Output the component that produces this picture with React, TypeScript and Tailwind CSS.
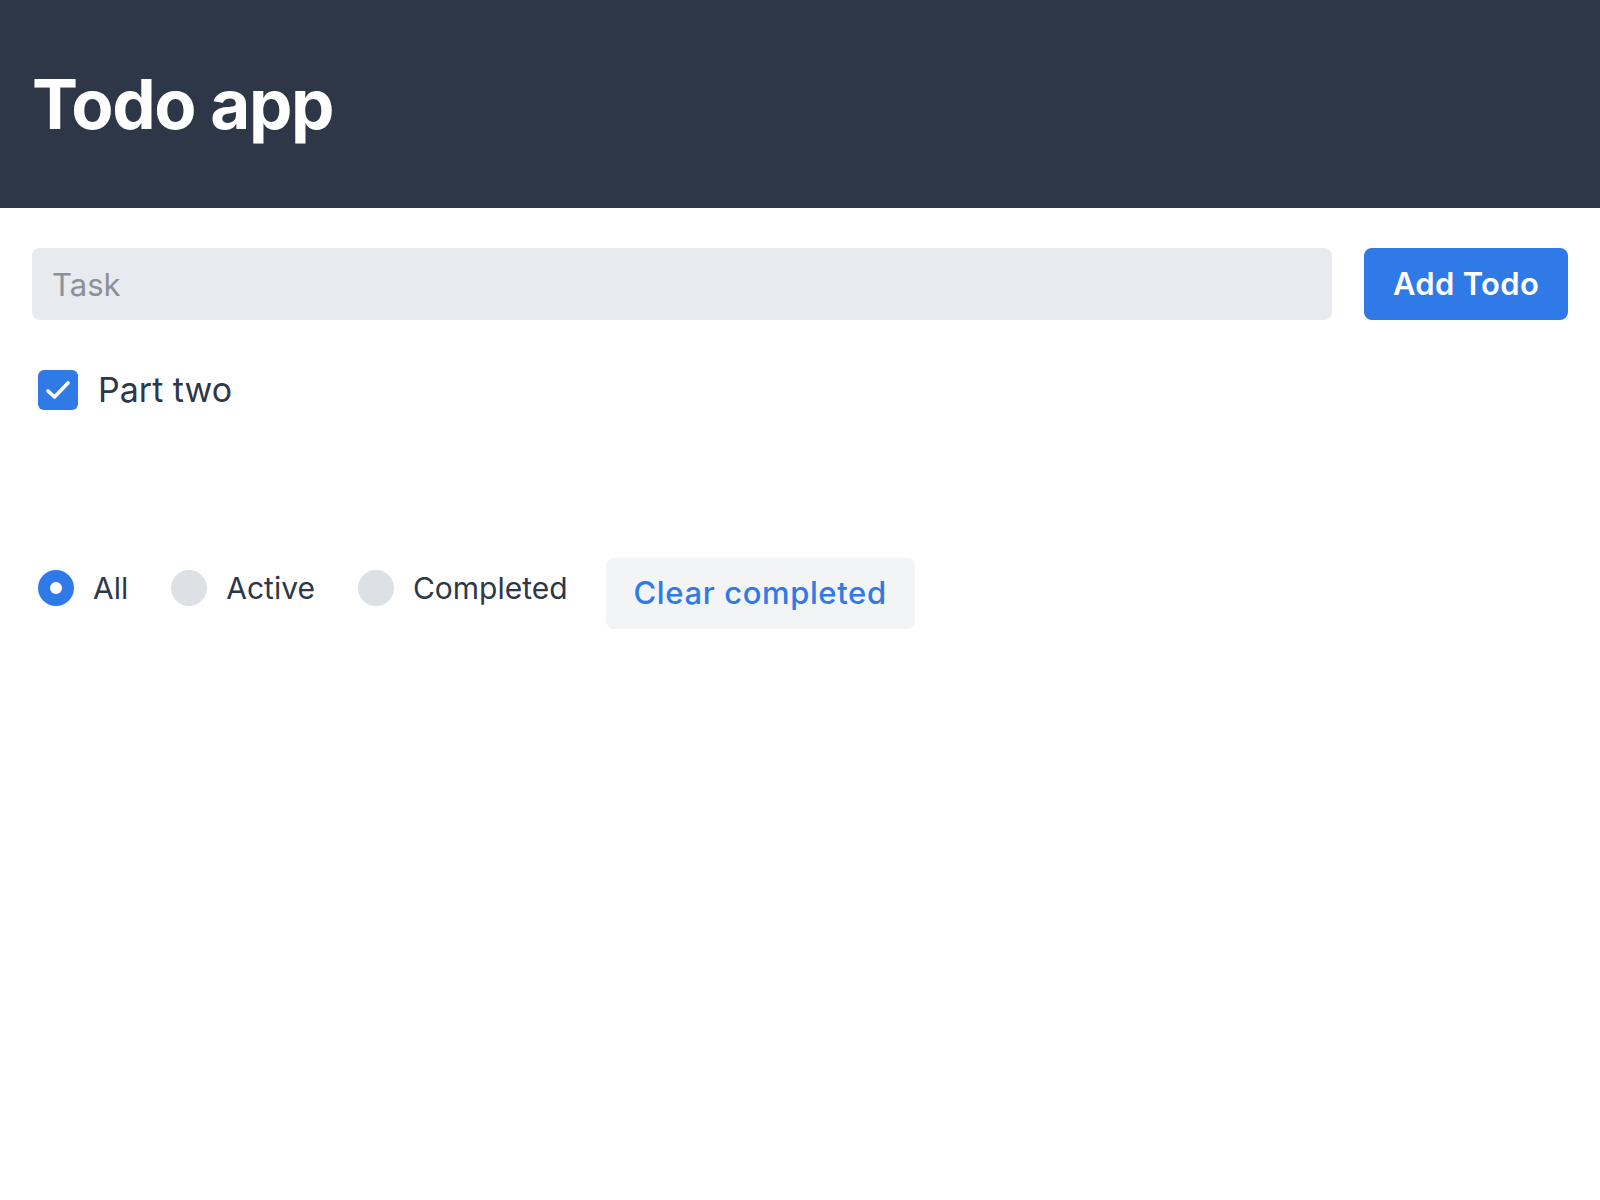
import React, { useState } from 'react';

type Filter = 'all' | 'active' | 'completed';

export default function App() {
  const [task, setTask] = useState('');
  const [todos, setTodos] = useState([{ id: 1, text: 'Part two', done: true }]);
  const [filter, setFilter] = useState<Filter>('all');

  const addTodo = () => {
    if (!task.trim()) return;
    setTodos([...todos, { id: Date.now(), text: task, done: false }]);
    setTask('');
  };

  const visible = todos.filter((t) =>
    filter === 'all' ? true : filter === 'active' ? !t.done : t.done
  );

  const filters: { key: Filter; label: string }[] = [
    { key: 'all', label: 'All' },
    { key: 'active', label: 'Active' },
    { key: 'completed', label: 'Completed' },
  ];

  return (
    <div className="min-h-screen bg-white font-['Inter','Liberation_Sans',sans-serif] text-[#2d3748]">
      {/* Header */}
      <header className="h-[208px] bg-[#2d3748] flex items-center px-8">
        <h1 className="text-[69px] font-bold text-white leading-none tracking-[-0.02em]">Todo app</h1>
      </header>

      <main className="px-8">
        {/* New task */}
        <div className="flex gap-8 mt-10">
          <input
            value={task}
            onChange={(e) => setTask(e.target.value)}
            placeholder="Task"
            className="flex-1 h-[72px] rounded-lg bg-[#e7eaee] px-5 text-[31px] outline-none placeholder:text-[#8b9099]"
          />
          <button
            onClick={addTodo}
            className="w-[204px] h-[72px] rounded-lg bg-[#2f7ae6] text-white text-[31px] font-semibold tracking-[0.01em]"
          >
            Add Todo
          </button>
        </div>

        {/* Todo list */}
        <ul className="mt-[50px] ml-[6px] min-h-[40px]">
          {visible.map((t) => (
            <li key={t.id} className="flex items-center gap-[20px] h-10">
              <button
                onClick={() => setTodos(todos.map((x) => (x.id === t.id ? { ...x, done: !x.done } : x)))}
                className={`w-10 h-10 rounded-md flex items-center justify-center ${t.done ? 'bg-[#2f7ae6]' : 'border-2 border-[#e2e8f0]'}`}
              >
                {t.done && (
                  <svg width="40" height="40" viewBox="0 0 40 40" fill="none">
                    <path d="M10 21l6.5 6L30 13" stroke="white" strokeWidth="3.6" strokeLinecap="round" strokeLinejoin="round" />
                  </svg>
                )}
              </button>
              <span className="text-[34px] leading-none">{t.text}</span>
            </li>
          ))}
        </ul>

        {/* Filters */}
        <div className="flex items-start mt-[148px] ml-[6px]">
          <div className="flex items-center gap-[43px] mt-3 mr-[38px]">
            {filters.map((f) => (
              <label key={f.key} className="flex items-center gap-[19px] h-9 cursor-pointer" onClick={() => setFilter(f.key)}>
                <span
                  className={`w-9 h-9 rounded-full flex items-center justify-center ${filter === f.key ? 'bg-[#2f7ae6]' : 'bg-[#dde0e5]'}`}
                >
                  {filter === f.key && <span className="w-3 h-3 rounded-full bg-white" />}
                </span>
                <span className="text-[30px] leading-none">{f.label}</span>
              </label>
            ))}
          </div>
          <button
            onClick={() => setTodos(todos.filter((t) => !t.done))}
            className="w-[309px] h-[71px] rounded-lg bg-[#f2f4f6] text-[#2f7ae6] text-[31px] font-medium tracking-[0.02em]"
          >
            Clear completed
          </button>
        </div>
      </main>
    </div>
  );
}
